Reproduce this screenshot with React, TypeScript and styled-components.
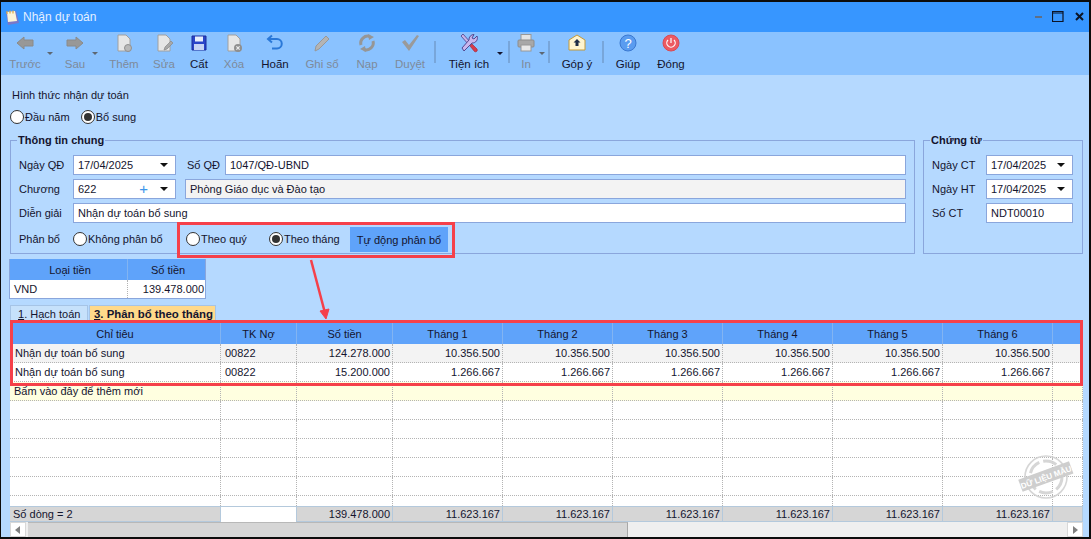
import React from 'react'
import styled, { createGlobalStyle } from 'styled-components'

const GlobalStyle = createGlobalStyle`
  html, body {
    margin: 0;
    padding: 0;
    height: 539px;
    overflow: hidden;
    background: #b5d9ff;
  }
  * {
    box-sizing: border-box;
  }
`

const GRID_COLUMNS = '211px 76px 96px repeat(6, 110px) 1fr'
const TEXT = '#14142e'
const HEADER_BLUE = '#5fa3fa'
const DOTS = '#b4b4b4'

const Window = styled.div`
  position: relative;
  width: 1091px;
  height: 539px;
  display: flex;
  flex-direction: column;
  border: 1px solid #0c0c0c;
  border-width: 2px 2px 2px 1px;
  background: #b5d9ff;
  font-family: 'Liberation Sans', Arial, sans-serif;
  font-size: 11px;
  line-height: 14px;
  color: ${TEXT};
`

const TitleBar = styled.div`
  height: 30px;
  flex: none;
  display: flex;
  align-items: center;
  background: #3796ff;
  padding: 0 5px 0 3px;
  color: #e4f0ff;
  font-size: 12px;
`

const TitleText = styled.span`
  margin-left: 3px;
  flex: 1;
`

const WindowButtons = styled.div`
  display: flex;
  align-items: center;
  gap: 10px;
  margin-top: -2px;
`

const Toolbar = styled.div`
  height: 43px;
  flex: none;
  display: flex;
  align-items: flex-start;
  background: #8ac2ff;
  padding-left: 4px;
  font-size: 11.5px;
`

const ToolButton = styled.div<{ $width: number; $disabled?: boolean }>`
  width: ${p => p.$width}px;
  height: 43px;
  flex: none;
  display: flex;
  flex-direction: column;
  align-items: center;
  padding-top: 1px;
  gap: 4px;
  white-space: nowrap;
  color: ${p => (p.$disabled ? '#7e8a9a' : TEXT)};
`

const ToolIcon = styled.div`
  width: 20px;
  height: 20px;
  display: flex;
  align-items: center;
  justify-content: center;
`

const Caret = styled.span<{ $width: number; $disabled?: boolean }>`
  width: ${p => p.$width}px;
  flex: none;
  height: 4px;
  margin-top: 20px;
  display: flex;
  justify-content: center;

  &::after {
    content: '';
    flex: none;
    border-left: 3px solid transparent;
    border-right: 3px solid transparent;
    border-top: 3px solid ${p => (p.$disabled ? '#5d6772' : '#14142e')};
  }
`

const Separator = styled.span<{ $width: number }>`
  width: ${p => p.$width}px;
  flex: none;
  height: 22px;
  margin-top: 9px;
  display: flex;
  justify-content: center;

  &::after {
    content: '';
    width: 2px;
    flex: none;
    background: #78a6da;
  }
`

const Content = styled.div`
  flex: 1;
  min-height: 0;
  display: flex;
  flex-direction: column;
  padding: 13px 6px 0 9px;
`

const PlainLabel = styled.div`
  padding-left: 2px;
  height: 14px;
`

const TypeRow = styled.div`
  display: flex;
  gap: 11px;
  margin-top: 8px;
  height: 14px;
`

const RadioItem = styled.label<{ $width?: number }>`
  display: flex;
  align-items: center;
  gap: 1px;
  height: 14px;
  flex: none;
  white-space: nowrap;
  ${p => (p.$width ? `width: ${p.$width}px;` : '')}
`

const RadioCircle = styled.span<{ $checked?: boolean }>`
  width: 14px;
  height: 14px;
  flex: none;
  border-radius: 50%;
  border: 1px solid #333;
  background: #fff;
  display: flex;
  align-items: center;
  justify-content: center;

  &::after {
    content: '';
    display: ${p => (p.$checked ? 'block' : 'none')};
    width: 8px;
    height: 8px;
    border-radius: 50%;
    background: #333;
  }
`

const GroupRow = styled.div`
  display: flex;
  gap: 8px;
  margin-top: 9px;
  height: 121px;
`

const GroupBox = styled.fieldset<{ $width: number }>`
  width: ${p => p.$width}px;
  flex: none;
  margin: 0;
  padding: 8px 8px 0;
  min-width: 0;
  border: 1px solid #8aa6dc;
  display: flex;
  flex-direction: column;
  gap: 4px;
`

const GroupTitle = styled.legend`
  font-weight: 700;
  padding: 0 1px;
  height: 14px;
  margin-left: -2px;
`

const FormRow = styled.div`
  display: flex;
  align-items: center;
  height: 20px;
`

const FieldLabel = styled.span<{ $width: number; $indent?: number }>`
  width: ${p => p.$width}px;
  flex: none;
  margin-left: ${p => p.$indent ?? 0}px;
`

const Field = styled.div<{ $width?: number; $muted?: boolean }>`
  height: 20px;
  ${p => (p.$width ? `width: ${p.$width}px; flex: none;` : 'flex: 1;')}
  background: ${p => (p.$muted ? '#f3f3f3' : '#fff')};
  border: 1px solid #8aa6dc;
  display: flex;
  align-items: center;
  padding: 0 5px 0 4px;
  white-space: nowrap;
`

const FieldValue = styled.span`
  flex: 1;
`

const PlusMark = styled.span`
  color: #3c96ea;
  font-size: 15px;
  margin-right: 12px;
`

const DropArrow = styled.span`
  width: 0;
  height: 0;
  border-left: 4px solid transparent;
  border-right: 4px solid transparent;
  border-top: 4px solid #111;
  margin-right: 2px;
`

const AllocateRow = styled(FormRow)`
  height: 24px;
`

const AllocateButton = styled.div`
  width: 98px;
  height: 25px;
  flex: none;
  margin: 1px 0 0 11px;
  display: flex;
  align-items: center;
  justify-content: center;
  background: ${HEADER_BLUE};
`

const CurrencyTable = styled.div`
  width: 197px;
  margin: 5px 0 0 -1px;
  border: 1px solid #8aa6dc;
  border-top: none;
`

const CurrencyRow = styled.div<{ $head?: boolean }>`
  display: grid;
  grid-template-columns: 117px 1fr;
  height: ${p => (p.$head ? 21 : 18)}px;
  background: ${p => (p.$head ? HEADER_BLUE : '#fff')};

  & > span {
    display: flex;
    align-items: center;
    padding: 0 1px 0 4px;
    justify-content: ${p => (p.$head ? 'center' : 'flex-start')};
  }
  & > span + span {
    justify-content: ${p => (p.$head ? 'center' : 'flex-end')};
    border-left: 1px ${p => (p.$head ? 'solid #82b4f2' : `dotted ${DOTS}`)};
  }
`

const TabRow = styled.div`
  display: flex;
  gap: 1px;
  margin-top: 6px;
  height: 17px;
  flex: none;
`

const Tab = styled.div<{ $active?: boolean }>`
  width: ${p => (p.$active ? 127 : 78)}px;
  height: 17px;
  padding-left: ${p => (p.$active ? 4 : 7)}px;
  display: flex;
  align-items: center;
  background: ${p => (p.$active ? '#ffd98a' : '#c6e1fb')};
  font-weight: ${p => (p.$active ? 700 : 400)};
  font-size: ${p => (p.$active ? 11.4 : 11)}px;
  white-space: nowrap;
  border: 1px solid #a6c4e6;
  border-bottom: none;

  u {
    text-underline-offset: 1px;
  }
`

const Grid = styled.div`
  flex: 1;
  min-height: 0;
  display: flex;
  flex-direction: column;
  width: 1073px;
  background: #fff;
`

const GridHead = styled.div`
  display: grid;
  grid-template-columns: ${GRID_COLUMNS};
  height: 22px;
  flex: none;
  background: ${HEADER_BLUE};
`

const HeadCell = styled.div`
  display: flex;
  align-items: center;
  justify-content: center;
  border-right: 1px solid #82b4f2;
  padding-top: 2px;
`

const RowsArea = styled.div`
  flex: 1;
  min-height: 0;
  overflow: hidden;
`

const GridRow = styled.div<{ $bg?: string }>`
  display: grid;
  grid-template-columns: ${GRID_COLUMNS};
  height: 19px;
  background: ${p => p.$bg ?? '#fff'};
  border-bottom: 1px dotted ${DOTS};
`

const Cell = styled.div<{ $right?: boolean; $indent?: number }>`
  display: flex;
  align-items: center;
  justify-content: ${p => (p.$right ? 'flex-end' : 'flex-start')};
  padding: 0 2px 1px ${p => p.$indent ?? 4}px;
  border-right: 1px dotted ${DOTS};
  white-space: nowrap;
`

const FooterRow = styled.div`
  display: grid;
  grid-template-columns: ${GRID_COLUMNS};
  height: 16px;
  flex: none;
  background: #d6d6d6;
  border-top: 1px solid #b4c9dc;
  border-bottom: 1px solid #b4c9dc;
`

const FooterCell = styled.div<{ $right?: boolean; $blank?: boolean }>`
  display: flex;
  align-items: center;
  justify-content: ${p => (p.$right ? 'flex-end' : 'flex-start')};
  padding: 0 2px 1px 3px;
  border-right: 1px solid #b4c9dc;
  background: ${p => (p.$blank ? '#fff' : 'transparent')};
`

const ScrollBar = styled.div`
  height: 15px;
  flex: none;
  display: flex;
  background: #efefef;
`

const ScrollButton = styled.div`
  width: 16px;
  flex: none;
  background: #fff;
  border: 1px solid #d8d8d8;
  display: flex;
  align-items: center;
  justify-content: center;
`

const ScrollThumb = styled.div`
  width: 600px;
  flex: none;
  margin-left: 2px;
  background: #d6d6d6;
  border-right: 1px solid #a8a8a8;
  border-top: 1px solid #b8b8b8;
`

const ScrollGap = styled.div`
  flex: 1;
`

const RedFrame = styled.div<{ $x: number; $y: number; $w: number; $h: number }>`
  position: absolute;
  left: ${p => p.$x}px;
  top: ${p => p.$y}px;
  width: ${p => p.$w}px;
  height: ${p => p.$h}px;
  border: 3px solid #f5404a;
  pointer-events: none;
`

const ArrowOverlay = styled.svg`
  position: absolute;
  left: 300px;
  top: 255px;
`

const Stamp = styled.svg`
  position: absolute;
  left: 1015px;
  top: 451px;
`

const Gray = ({ children }: { children: React.ReactNode }) => (
  <svg width="20" height="20" viewBox="0 0 20 20">{children}</svg>
)

const ArrowIcon = ({ flip }: { flip?: boolean }) => (
  <Gray>
    <path
      d="M9 4 L2 10 L9 16 V13 H18 V7 H9 Z"
      fill="#989898"
      stroke="#8a8a8a"
      transform={flip ? 'matrix(-1 0 0 1 20 0)' : undefined}
    />
  </Gray>
)

const PageShape = () => (
  <path d="M4 2 H12 L16 6 V18 H4 Z" fill="#e6e6e6" stroke="#a0a0a0" strokeWidth="1" />
)

const icons: Record<string, React.ReactNode> = {
  back: <ArrowIcon />,
  next: <ArrowIcon flip />,
  add: (
    <Gray>
      <PageShape />
      <circle cx="14" cy="15" r="3.5" fill="#b8b8b8" stroke="#909090" />
    </Gray>
  ),
  edit: (
    <Gray>
      <PageShape />
      <path d="M10 17 L11 14 L17 8 L19 10 L13 16 Z" fill="#a8a8a8" stroke="#888" strokeWidth="0.7" />
    </Gray>
  ),
  save: (
    <Gray>
      <path d="M3 3 H17 V17 H3 Z" fill="#2a45c8" stroke="#1c2c9c" />
      <rect x="6" y="3.5" width="8" height="5" fill="#e8eefa" />
      <rect x="5" y="11" width="10" height="6" fill="#c6d4f4" />
    </Gray>
  ),
  remove: (
    <Gray>
      <PageShape />
      <circle cx="14" cy="15" r="4" fill="#8f8f8f" />
      <path d="M12.4 13.4 L15.6 16.6 M15.6 13.4 L12.4 16.6" stroke="#eee" strokeWidth="1.2" />
    </Gray>
  ),
  undo: (
    <Gray>
      <path
        d="M3 6 H12 A4.5 4.5 0 0 1 12 15.5 H7 M7 2.5 L3 6 L7 9.5"
        fill="none"
        stroke="#2a78d8"
        strokeWidth="2"
      />
    </Gray>
  ),
  post: (
    <Gray>
      <path d="M3 18 L4 13 L14 3 L17 6 L7 16 Z" fill="#b4b4b4" stroke="#989898" />
    </Gray>
  ),
  reload: (
    <Gray>
      <path
        d="M4 12 A7 7 0 0 1 13 3.5 M16 8 A7 7 0 0 1 7 16.5"
        fill="none"
        stroke="#969696"
        strokeWidth="3"
      />
      <path d="M11 1 L17 4 L12 7 Z M9 19 L3 16 L8 13 Z" fill="#969696" />
    </Gray>
  ),
  approve: (
    <Gray>
      <path d="M2 9 L5 7 L9 12 L17 2 L19 3 L9 18 Z" fill="#9a9a9a" />
    </Gray>
  ),
  tools: (
    <Gray>
      <path d="M2 3 L4 1 L12 10 L10 12 Z" fill="#c8b4e8" stroke="#4a3c86" strokeWidth="0.8" />
      <path
        d="M18 3 L15 6 L13 5 L15 1.5 A5 5 0 0 0 10 7 L3 15 L5 18 L13 10 A5 5 0 0 0 18 3 Z"
        fill="#c9b6ec"
        stroke="#4a3c86"
        strokeWidth="0.9"
      />
      <path d="M11 13 L13 11 L18 16 A1.8 1.8 0 0 1 15.5 18.5 Z" fill="#d83a4a" stroke="#a02030" strokeWidth="0.6" />
    </Gray>
  ),
  print: (
    <Gray>
      <rect x="5" y="1.5" width="10" height="6" fill="#e4e4e4" stroke="#989898" />
      <rect x="2" y="7" width="16" height="7" rx="1" fill="#a8a8a8" stroke="#8c8c8c" />
      <rect x="5" y="12" width="10" height="6" fill="#e8e8e8" stroke="#989898" />
    </Gray>
  ),
  feedback: (
    <Gray>
      <path d="M2 7 L10 2 L18 7 V17 H2 Z" fill="#fff4cf" stroke="#c49a38" />
      <path d="M10 6 L13.5 9.5 H11.5 V13 H8.5 V9.5 H6.5 Z" fill="#1f2c46" />
    </Gray>
  ),
  help: (
    <Gray>
      <circle cx="10" cy="10" r="8" fill="#5a9cf0" stroke="#3a78d0" />
      <text x="10" y="15" textAnchor="middle" fontSize="13" fill="#fff" fontFamily="Liberation Sans">?</text>
    </Gray>
  ),
  close: (
    <Gray>
      <circle cx="10" cy="10" r="8" fill="#ec5a62" stroke="#d84a54" />
      <path d="M7 7 A4.2 4.2 0 1 0 13 7 M10 5 V10" fill="none" stroke="#fff" strokeWidth="1.2" />
    </Gray>
  ),
}

type ToolEntry =
  | { kind: 'button'; label: string; icon: string; width: number; disabled?: boolean }
  | { kind: 'caret'; width: number; disabled?: boolean }
  | { kind: 'sep'; width: number }

const toolbarEntries: ToolEntry[] = [
  { kind: 'button', label: 'Trước', icon: 'back', width: 40, disabled: true },
  { kind: 'caret', width: 10, disabled: true },
  { kind: 'button', label: 'Sau', icon: 'next', width: 40, disabled: true },
  { kind: 'caret', width: 0, disabled: true },
  { kind: 'button', label: 'Thêm', icon: 'add', width: 58, disabled: true },
  { kind: 'button', label: 'Sửa', icon: 'edit', width: 22, disabled: true },
  { kind: 'button', label: 'Cất', icon: 'save', width: 48 },
  { kind: 'button', label: 'Xóa', icon: 'remove', width: 22, disabled: true },
  { kind: 'button', label: 'Hoãn', icon: 'undo', width: 60 },
  { kind: 'button', label: 'Ghi sổ', icon: 'post', width: 34, disabled: true },
  { kind: 'button', label: 'Nạp', icon: 'reload', width: 56, disabled: true },
  { kind: 'button', label: 'Duyệt', icon: 'approve', width: 30, disabled: true },
  { kind: 'sep', width: 20 },
  { kind: 'button', label: 'Tiện ích', icon: 'tools', width: 48 },
  { kind: 'caret', width: 14 },
  { kind: 'sep', width: 3 },
  { kind: 'button', label: 'In', icon: 'print', width: 32, disabled: true },
  { kind: 'caret', width: 0, disabled: true },
  { kind: 'sep', width: 14 },
  { kind: 'button', label: 'Góp ý', icon: 'feedback', width: 42 },
  { kind: 'sep', width: 10 },
  { kind: 'button', label: 'Giúp', icon: 'help', width: 40 },
  { kind: 'button', label: 'Đóng', icon: 'close', width: 46 },
]

const MONTHS = ['Tháng 1', 'Tháng 2', 'Tháng 3', 'Tháng 4', 'Tháng 5', 'Tháng 6']

const dataRows = [
  { bg: '#f3f3f3', amount: '124.278.000', monthly: '10.356.500' },
  { bg: '#fff', amount: '15.200.000', monthly: '1.266.667' },
]

const App = () => {
  return (
    <>
      <GlobalStyle />
      <Window>
        <TitleBar>
          <svg width="16" height="17" viewBox="0 0 16 17">
            <path d="M2 3 L12 2 L15 14 L4 16 Z" fill="#7a78c8" />
            <path d="M3 3 L11 2 L13 12 L4 13 Z" fill="#fbf4d8" />
            <path d="M3 2 V5 M6 1.5 V4.5 M9 1.5 V4.5" stroke="#d8a848" strokeWidth="1.2" />
          </svg>
          <TitleText>Nhận dự toán</TitleText>
          <WindowButtons>
            <svg width="10" height="11" viewBox="0 0 10 11">
              <rect x="3" y="5" width="7" height="2" fill="#5f6f86" />
            </svg>
            <svg width="12" height="11" viewBox="0 0 12 11">
              <path d="M0.5 0.5 H11 V10.5 H0.5 Z M0.5 2 H11" fill="none" stroke="#0c1426" strokeWidth="1.2" />
            </svg>
            <svg width="10" height="11" viewBox="0 0 10 11">
              <path d="M2 2 L9 9 M9 2 L2 9" stroke="#0c1426" strokeWidth="2" />
            </svg>
          </WindowButtons>
        </TitleBar>

        <Toolbar>
          {toolbarEntries.map((entry, index) => {
            if (entry.kind === 'caret') {
              return <Caret key={index} $width={entry.width} $disabled={entry.disabled} />
            }
            if (entry.kind === 'sep') {
              return <Separator key={index} $width={entry.width} />
            }
            return (
              <ToolButton key={index} $width={entry.width} $disabled={entry.disabled}>
                <ToolIcon>{icons[entry.icon]}</ToolIcon>
                <span>{entry.label}</span>
              </ToolButton>
            )
          })}
        </Toolbar>

        <Content>
          <PlainLabel>Hình thức nhận dự toán</PlainLabel>
          <TypeRow>
            <RadioItem>
              <RadioCircle />
              Đầu năm
            </RadioItem>
            <RadioItem>
              <RadioCircle $checked />
              Bổ sung
            </RadioItem>
          </TypeRow>

          <GroupRow>
            <GroupBox $width={905}>
              <GroupTitle>Thông tin chung</GroupTitle>
              <FormRow>
                <FieldLabel $width={54}>Ngày QĐ</FieldLabel>
                <Field $width={103}>
                  <FieldValue>17/04/2025</FieldValue>
                  <DropArrow />
                </Field>
                <FieldLabel $width={38} $indent={11}>Số QĐ</FieldLabel>
                <Field>1047/QĐ-UBND</Field>
              </FormRow>
              <FormRow>
                <FieldLabel $width={54}>Chương</FieldLabel>
                <Field $width={103}>
                  <FieldValue>622</FieldValue>
                  <PlusMark>+</PlusMark>
                  <DropArrow />
                </Field>
                <FieldLabel $width={0} $indent={9} />
                <Field $muted>Phòng Giáo dục và Đào tạo</Field>
              </FormRow>
              <FormRow>
                <FieldLabel $width={54}>Diễn giải</FieldLabel>
                <Field>Nhận dự toán bổ sung</Field>
              </FormRow>
              <AllocateRow>
                <FieldLabel $width={54}>Phân bổ</FieldLabel>
                <RadioItem $width={113}>
                  <RadioCircle />
                  Không phân bổ
                </RadioItem>
                <RadioItem $width={83}>
                  <RadioCircle />
                  Theo quý
                </RadioItem>
                <RadioItem $width={70}>
                  <RadioCircle $checked />
                  Theo tháng
                </RadioItem>
                <AllocateButton>Tự động phân bổ</AllocateButton>
              </AllocateRow>
            </GroupBox>

            <GroupBox $width={160}>
              <GroupTitle>Chứng từ</GroupTitle>
              <FormRow>
                <FieldLabel $width={54}>Ngày CT</FieldLabel>
                <Field $width={87}>
                  <FieldValue>17/04/2025</FieldValue>
                  <DropArrow />
                </Field>
              </FormRow>
              <FormRow>
                <FieldLabel $width={54}>Ngày HT</FieldLabel>
                <Field $width={87}>
                  <FieldValue>17/04/2025</FieldValue>
                  <DropArrow />
                </Field>
              </FormRow>
              <FormRow>
                <FieldLabel $width={54}>Số CT</FieldLabel>
                <Field $width={87}>NDT00010</Field>
              </FormRow>
            </GroupBox>
          </GroupRow>

          <CurrencyTable>
            <CurrencyRow $head>
              <span>Loại tiền</span>
              <span>Số tiền</span>
            </CurrencyRow>
            <CurrencyRow>
              <span>VND</span>
              <span>139.478.000</span>
            </CurrencyRow>
          </CurrencyTable>

          <TabRow>
            <Tab>
              <u>1</u>. Hạch toán
            </Tab>
            <Tab $active>
              <u>3</u>. Phân bổ theo tháng
            </Tab>
          </TabRow>

          <Grid>
            <GridHead>
              <HeadCell>Chỉ tiêu</HeadCell>
              <HeadCell>TK Nợ</HeadCell>
              <HeadCell>Số tiền</HeadCell>
              {MONTHS.map(m => (
                <HeadCell key={m}>{m}</HeadCell>
              ))}
              <HeadCell />
            </GridHead>

            <RowsArea>
              {dataRows.map((row, i) => (
                <GridRow key={i} $bg={row.bg}>
                  <Cell $indent={5}>Nhận dự toán bổ sung</Cell>
                  <Cell>00822</Cell>
                  <Cell $right>{row.amount}</Cell>
                  {MONTHS.map(m => (
                    <Cell key={m} $right>{row.monthly}</Cell>
                  ))}
                  <Cell />
                </GridRow>
              ))}
              <GridRow $bg="#ffffe0">
                <Cell>Bấm vào đây để thêm mới</Cell>
                <Cell />
                <Cell />
                {MONTHS.map(m => (
                  <Cell key={m} />
                ))}
                <Cell />
              </GridRow>
              {[0, 1, 2, 3, 4, 5].map(i => (
                <GridRow key={i}>
                  <Cell />
                  <Cell />
                  <Cell />
                  {MONTHS.map(m => (
                    <Cell key={m} />
                  ))}
                  <Cell />
                </GridRow>
              ))}
            </RowsArea>

            <FooterRow>
              <FooterCell>Số dòng = 2</FooterCell>
              <FooterCell $blank />
              <FooterCell $right>139.478.000</FooterCell>
              {MONTHS.map(m => (
                <FooterCell key={m} $right>11.623.167</FooterCell>
              ))}
              <FooterCell />
            </FooterRow>

            <ScrollBar>
              <ScrollButton>
                <svg width="6" height="8" viewBox="0 0 6 8">
                  <path d="M5 0 L0 4 L5 8 Z" fill="#808080" />
                </svg>
              </ScrollButton>
              <ScrollThumb />
              <ScrollGap />
              <ScrollButton>
                <svg width="6" height="8" viewBox="0 0 6 8">
                  <path d="M1 0 L6 4 L1 8 Z" fill="#808080" />
                </svg>
              </ScrollButton>
            </ScrollBar>
          </Grid>
        </Content>

        <RedFrame $x={176} $y={220} $w={278} $h={36} />
        <RedFrame $x={9} $y={318} $w={1073} $h={66} />

        <ArrowOverlay width="40" height="66" viewBox="0 0 40 66">
          <path d="M10 3 L24 56" stroke="#f5404a" strokeWidth="2.5" fill="none" />
          <path d="M19 54 L28 52 L25 62 Z" fill="#f5404a" stroke="#f5404a" />
        </ArrowOverlay>

        <Stamp width="60" height="48" viewBox="0 0 60 48">
          <g opacity="0.9" fill="none" stroke="#d2d2d2">
            <circle cx="30" cy="24" r="21" strokeWidth="1.6" />
            <circle cx="30" cy="24" r="16" strokeWidth="3" strokeDasharray="14 4" />
          </g>
          <g transform="rotate(-20 30 24)">
            <rect x="3" y="17" width="54" height="13" fill="#cecece" />
            <text x="30" y="27" textAnchor="middle" fontSize="8" fontWeight="700" fill="#fff" fontFamily="Liberation Sans">
              DỮ LIỆU MẪU
            </text>
          </g>
        </Stamp>
      </Window>
    </>
  )
}

export default App
